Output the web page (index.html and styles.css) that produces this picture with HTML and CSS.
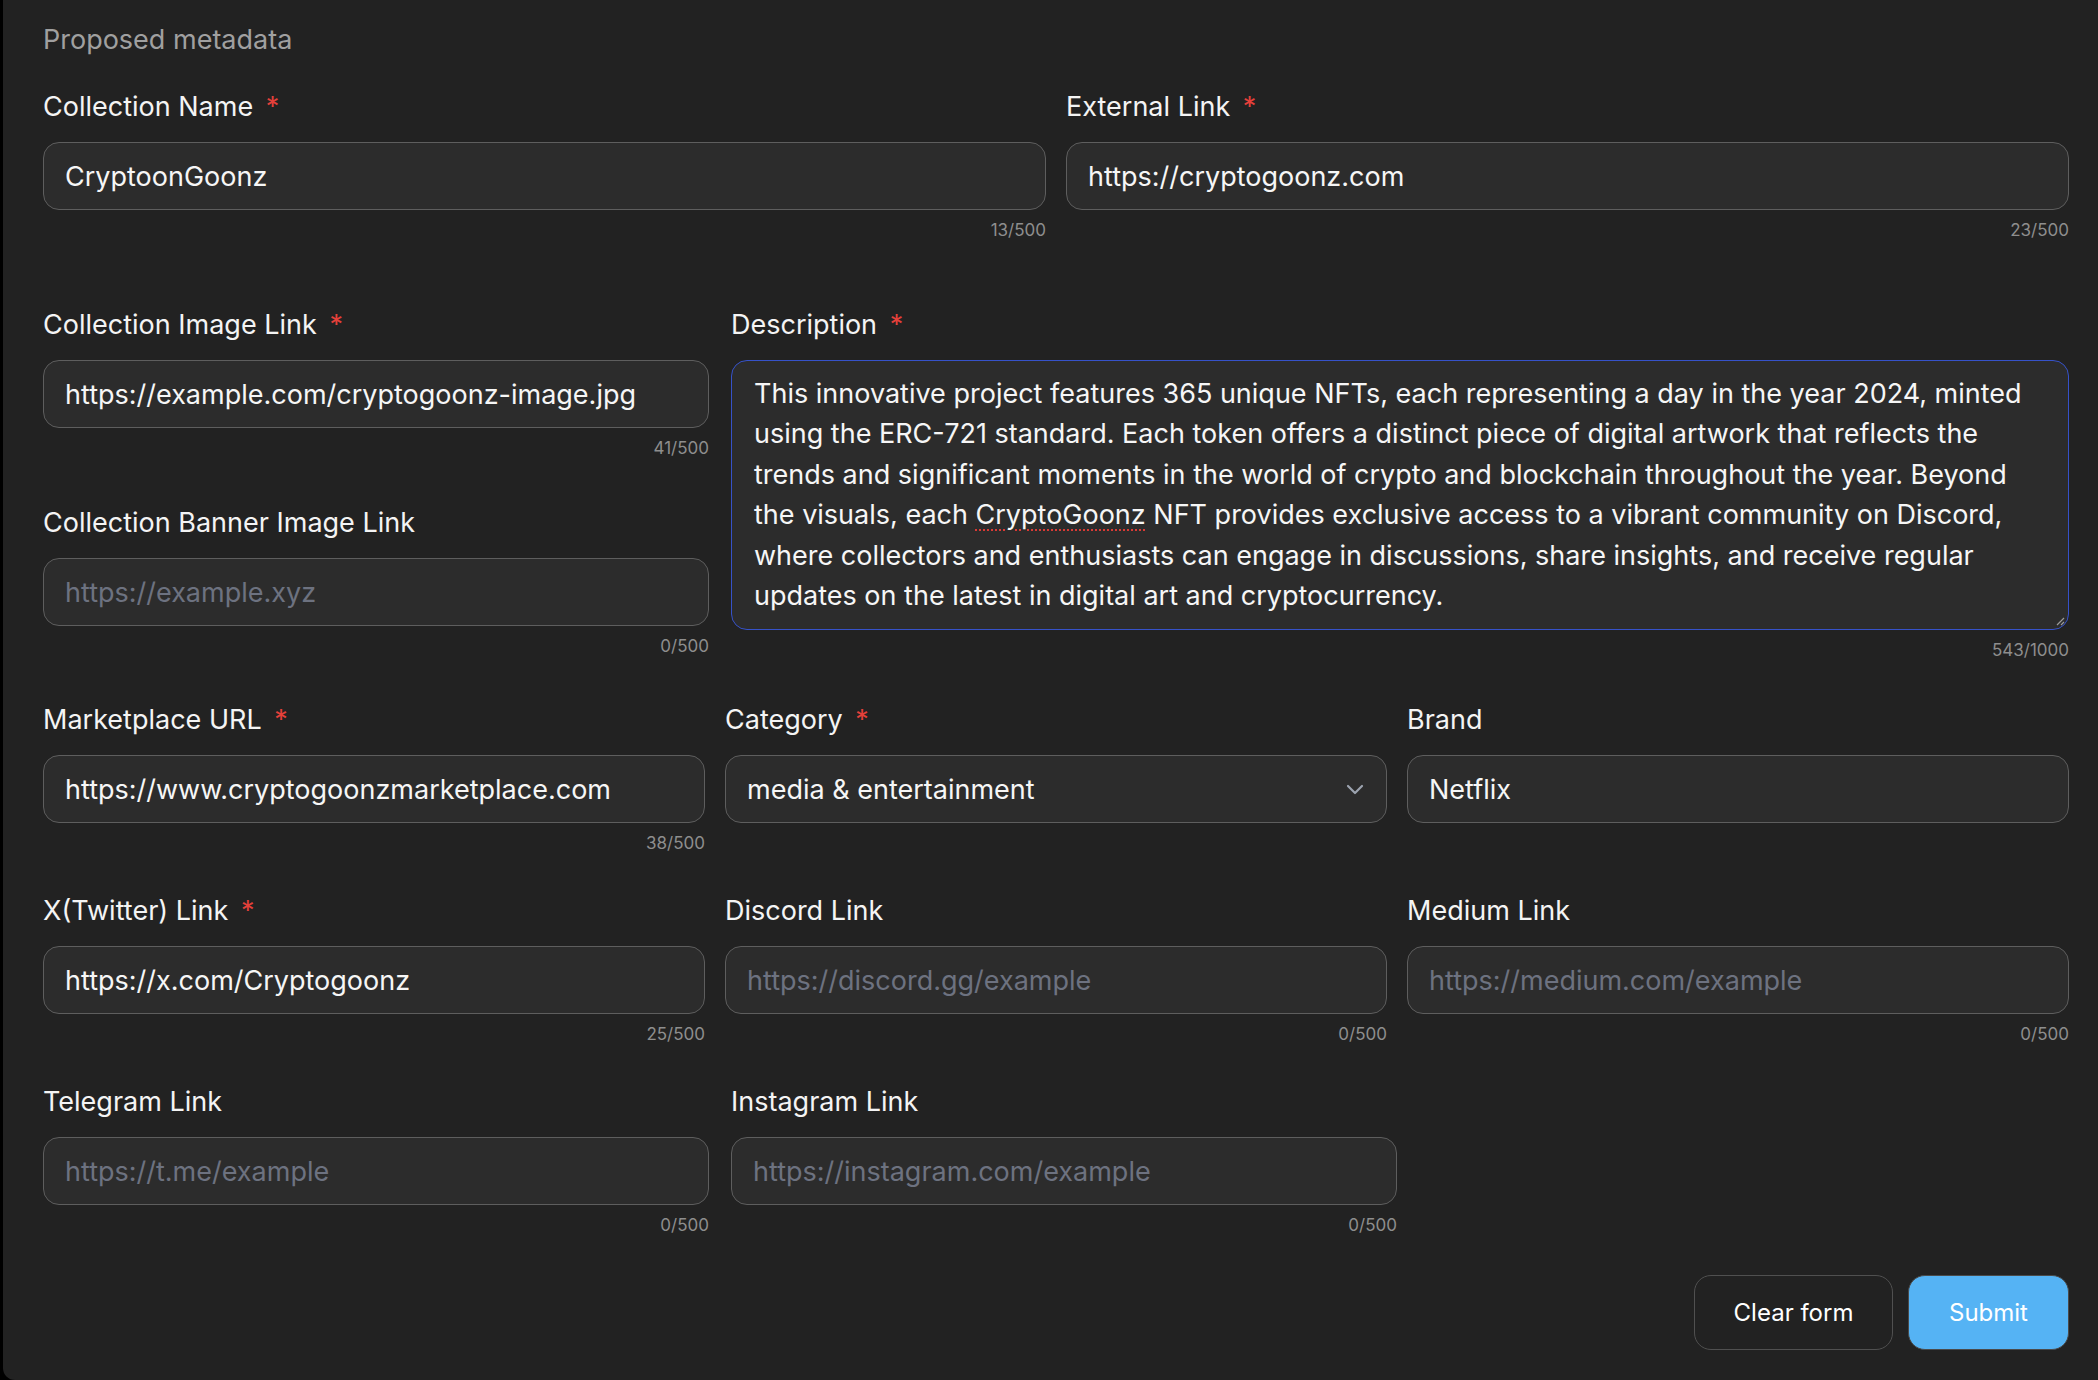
FILE: index.html
```html
<!DOCTYPE html>
<html lang="en">
<head>
    <meta charset="UTF-8">
    <title>Proposed metadata</title>
    <link rel="stylesheet" href="styles.css">
</head>
<body>
<main class="panel">
    <h2 class="section-title">Proposed metadata</h2>

    <div class="row row-two">
        <div class="field">
            <label class="label">Collection Name <span class="req">*</span></label>
            <input class="input" type="text" value="CryptoonGoonz">
            <div class="count">13/500</div>
        </div>
        <div class="field">
            <label class="label">External Link <span class="req">*</span></label>
            <input class="input" type="text" value="https://cryptogoonz.com">
            <div class="count">23/500</div>
        </div>
    </div>

    <div class="row row-desc">
        <div class="stack">
            <div class="field">
                <label class="label">Collection Image Link <span class="req">*</span></label>
                <input class="input" type="text" value="https://example.com/cryptogoonz-image.jpg">
                <div class="count">41/500</div>
            </div>
            <div class="field">
                <label class="label">Collection Banner Image Link</label>
                <input class="input" type="text" placeholder="https://example.xyz">
                <div class="count">0/500</div>
            </div>
        </div>
        <div class="field">
            <label class="label">Description <span class="req">*</span></label>
            <div class="textarea">This innovative project features 365 unique NFTs, each representing a day in the year 2024, minted using the ERC-721 standard. Each token offers a distinct piece of digital artwork that reflects the trends and significant moments in the world of crypto and blockchain throughout the year. Beyond the visuals, each <span class="misspelled">CryptoGoonz</span> NFT provides exclusive access to a vibrant community on Discord, where collectors and enthusiasts can engage in discussions, share insights, and receive regular updates on the latest in digital art and cryptocurrency.<svg class="grip" width="12" height="12" viewBox="0 0 12 12"><path d="M11 4 L4 11 M11 8 L8 11" stroke="#9a9a9a" stroke-width="1.2" fill="none"/></svg></div>
            <div class="count">543/1000</div>
        </div>
    </div>

    <div class="row row-three">
        <div class="field">
            <label class="label">Marketplace URL <span class="req">*</span></label>
            <input class="input" type="text" value="https://www.cryptogoonzmarketplace.com">
            <div class="count">38/500</div>
        </div>
        <div class="field">
            <label class="label">Category <span class="req">*</span></label>
            <div class="select">
                <span>media &amp; entertainment</span>
                <svg width="26" height="26" viewBox="0 0 26 26"><path d="M6 10 L13 17 L20 10" stroke="#9ca3af" stroke-width="2.2" fill="none" stroke-linecap="round" stroke-linejoin="round"/></svg>
            </div>
        </div>
        <div class="field">
            <label class="label">Brand</label>
            <input class="input" type="text" value="Netflix">
        </div>
    </div>

    <div class="row row-three">
        <div class="field">
            <label class="label">X(Twitter) Link <span class="req">*</span></label>
            <input class="input" type="text" value="https://x.com/Cryptogoonz">
            <div class="count">25/500</div>
        </div>
        <div class="field">
            <label class="label">Discord Link</label>
            <input class="input" type="text" placeholder="https://discord.gg/example">
            <div class="count">0/500</div>
        </div>
        <div class="field">
            <label class="label">Medium Link</label>
            <input class="input" type="text" placeholder="https://medium.com/example">
            <div class="count">0/500</div>
        </div>
    </div>

    <div class="row row-last">
        <div class="field">
            <label class="label">Telegram Link</label>
            <input class="input" type="text" placeholder="https://t.me/example">
            <div class="count">0/500</div>
        </div>
        <div class="field">
            <label class="label">Instagram Link</label>
            <input class="input" type="text" placeholder="https://instagram.com/example">
            <div class="count">0/500</div>
        </div>
    </div>

    <div class="actions">
        <button class="btn btn-clear" type="button">Clear form</button>
        <button class="btn btn-submit" type="button">Submit</button>
    </div>
</main>
</body>
</html>
```

FILE: styles.css
```css
html, body {
    margin: 0;
    padding: 0;
    height: 100%;
    background: #000;
    font-family: Inter, 'Noto Sans', sans-serif;
}

.panel {
    box-sizing: border-box;
    min-height: 100%;
    margin-left: 3px;
    padding: 24px 29px 30px 40px;
    background: #222222;
    border-bottom-left-radius: 12px;
    color: #f4f4f4;
}

.section-title {
    margin: 0 0 35px;
    font-size: 27px;
    line-height: 32px;
    font-weight: 400;
    color: #a0a0a0;
}

.row {
    display: grid;
    column-gap: 20px;
    margin-bottom: 42px;
}

.row-two {
    grid-template-columns: 1fr 1fr;
    margin-bottom: 69px;
}

.row-desc {
    grid-template-columns: 666px 1fr;
    column-gap: 22px;
    margin-bottom: 44px;
}

.row-three {
    grid-template-columns: 1fr 1fr 1fr;
}

.row-last {
    grid-template-columns: 666px 666px;
    column-gap: 22px;
    margin-bottom: 40px;
}

.stack {
    display: flex;
    flex-direction: column;
    gap: 49px;
}

.field {
    display: flex;
    flex-direction: column;
    min-width: 0;
}

.label {
    font-size: 27px;
    line-height: 32px;
    margin-bottom: 19px;
    color: #f4f4f4;
}

.req {
    color: #e5403a;
    margin-left: 5px;
}

.input, .select, .textarea {
    box-sizing: border-box;
    width: 100%;
    height: 68px;
    padding: 0 21px;
    background: #2c2c2c;
    border: 1.5px solid #5e5e5e;
    border-radius: 16px;
    color: #f6f6f6;
    font-family: inherit;
    font-size: 27px;
    outline: none;
}

.input::placeholder {
    color: #6d7280;
}

.select {
    display: flex;
    align-items: center;
    justify-content: space-between;
    padding-right: 18px;
}

.textarea {
    position: relative;
    height: 270px;
    padding: 13px 22px 15px;
    line-height: 40.4px;
    border: 1.5px solid #3652c9;
}

.misspelled {
    text-decoration: underline dotted #d93a35;
    text-decoration-thickness: 2px;
    text-underline-offset: 5px;
}

.grip {
    position: absolute;
    right: 3px;
    bottom: 3px;
}

.count {
    margin-top: 10px;
    text-align: right;
    font-size: 17px;
    line-height: 20px;
    color: #8e8e8e;
}

.actions {
    display: flex;
    justify-content: flex-end;
    gap: 15px;
}

.btn {
    height: 75px;
    border-radius: 17px;
    font-family: inherit;
    font-size: 24px;
    color: #fff;
    cursor: pointer;
}

.btn-clear {
    width: 199px;
    background: transparent;
    border: 1.5px solid #505050;
}

.btn-submit {
    width: 161px;
    background: #55b3f4;
    border: 1.5px solid #4a4a4a;
}
```
